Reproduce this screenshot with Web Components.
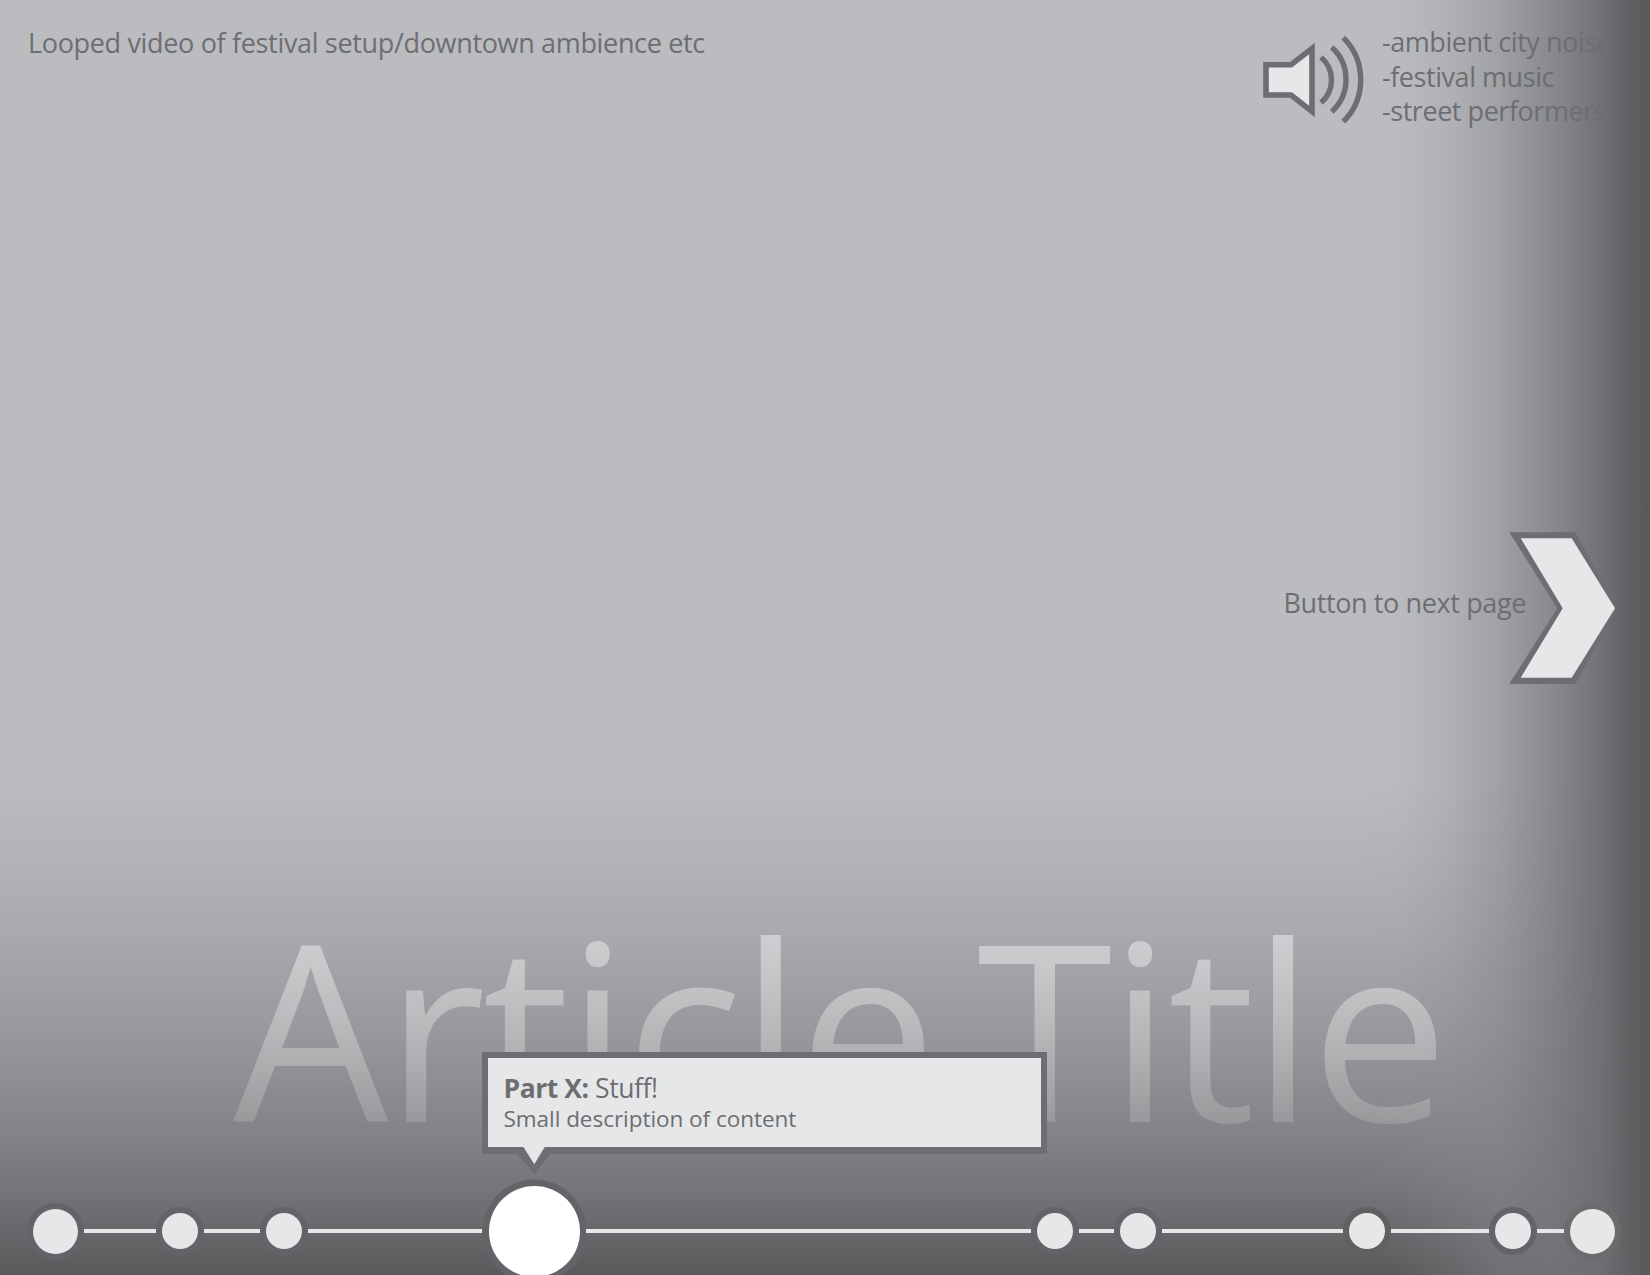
<!DOCTYPE html>
<html lang="en"><head><meta charset="utf-8"><title>Article Title</title>
<style>
html,body{margin:0;padding:0;background:#bcbdc0}
</style></head>
<body>
<x-stage>
  <x-topbar>
    <x-caption>Looped video of festival setup/downtown ambience etc</x-caption>
    <x-sound><div>-ambient city noise</div><div>-festival music</div><div>-street performers</div></x-sound>
  </x-topbar>
  <x-next>Button to next page</x-next>
  <x-title>Article Title</x-title>
  <x-callout><b slot="head">Part X</b><span slot="sub">Small description of content</span></x-callout>
  <x-timeline>
    <x-dot size="45"></x-dot><x-line w="72.5"></x-line>
    <x-dot></x-dot><x-line w="56"></x-line>
    <x-dot></x-dot><x-line w="174"></x-line>
    <x-dot size="91" active></x-dot><x-line w="445"></x-line>
    <x-dot></x-dot><x-line w="35"></x-line>
    <x-dot></x-dot><x-line w="181"></x-line>
    <x-dot halo="#5f6062"></x-dot><x-line w="98"></x-line>
    <x-dot halo="#636467"></x-dot><x-line w="27"></x-line>
    <x-dot size="45" halo="#6b6c6e"></x-dot>
  </x-timeline>
</x-stage>
<script>
const FONT = '"Open Sans","Noto Sans",sans-serif';
function def(name, html, init){
  customElements.define(name, class extends HTMLElement{
    constructor(){super();this.attachShadow({mode:'open'}).innerHTML=html;}
    connectedCallback(){ if(init) init(this); }
  });
}
def('x-stage',`<style>
:host{display:flex;flex-direction:column;position:relative;width:1650px;height:1275px;overflow:hidden;
 font-family:${FONT};color:#6d6e71;
 background:
  linear-gradient(90deg,rgba(150,151,154,0) 1360px,rgba(150,151,154,.04) 1400px,rgba(140,141,144,.23) 1450px,rgba(133,134,137,.51) 1500px,rgba(121,122,125,.75) 1550px,rgba(110,111,114,.96) 1600px,rgb(94,95,97) 1633px,rgb(88,89,91) 1650px),
  linear-gradient(180deg,#bbbcbf 0,#bbbcbf 780px,#b2b3b6 860px,#a9aaad 930px,#98999c 1030px,#818285 1140px,#747578 1190px,#5f6062 1255px,#58595b 1275px)}
</style><slot></slot>`);
def('x-topbar',`<style>:host{display:flex;justify-content:space-between;padding:25px 28px 0;height:104px}</style><slot></slot>`);
def('x-caption',`<style>:host{display:block;font-size:27px;line-height:35px;letter-spacing:-.335px;white-space:nowrap}</style><slot></slot>`);
def('x-sound',`<style>
:host{display:flex;gap:16px;margin-right:0;width:362px;font-size:27px;line-height:34.6px;letter-spacing:-.45px;white-space:nowrap}
svg{flex:none;width:106px;height:90px;margin-top:10px}
.t{width:240px}
</style>
<svg viewBox="1260 35 106 90" aria-hidden="true">
<polygon points="1266,64.7 1291,64.7 1312,48.5 1312,111.5 1291,95 1266,95" fill="#e6e7e8" stroke="#6d6e71" stroke-width="5.6"/>
<g fill="none" stroke="#6d6e71" stroke-width="5.4">
<path d="M1321 57.3A29.8 29.8 0 0 1 1321 102.7"/>
<path d="M1331.7 47.3A43.4 43.4 0 0 1 1331.7 111.7"/>
<path d="M1343.3 37.7A59.4 59.4 0 0 1 1343.3 121.7"/>
</g></svg><div class="t"><slot></slot></div>`);
def('x-next',`<style>
:host{display:flex;justify-content:flex-end;align-items:center;margin-top:403px;padding-right:33px;font-size:27px;letter-spacing:-.38px;white-space:nowrap}
span{padding-bottom:12px}
svg{flex:none;width:108px;height:152px;margin-left:-17px}
</style><span><slot></slot></span>
<svg viewBox="1509 532 108 152" aria-hidden="true">
<polygon points="1509.3,532.3 1575.3,532.3 1616.7,608.3 1575.3,684 1509.3,684 1557.3,608.3" fill="#6d6e71"/>
<polygon points="1520.7,538.3 1571.7,538.3 1615,608.3 1571.7,677.7 1520.7,677.7 1562.7,608.3" fill="#e6e7e8"/>
</svg>`);
def('x-title',`<style>
:host{display:block;margin-top:auto;padding:0 0 60.5px 233px;font-size:246px;font-weight:450;line-height:200px;letter-spacing:-3.4px;word-spacing:-16.7px;white-space:nowrap}
span{display:inline-block;padding-right:20px;color:transparent;-webkit-background-clip:text;background-clip:text;
 background-image:linear-gradient(180deg,rgba(230,231,232,.6) 10px,rgba(230,231,232,.2) 195px)}
</style><span><slot></slot></span>`);
def('x-callout',`<style>
:host{display:block;position:absolute;z-index:2;left:482px;top:1052px;width:564.5px;height:102px;box-sizing:border-box;
 border:6px solid #6d6e71;border-bottom-width:7px;background:#e6e7e8;padding-left:15.5px;white-space:nowrap}
.h{font-size:26.5px;line-height:31px;margin-top:15px;letter-spacing:-.45px}
.s{font-size:22.5px;line-height:30px;letter-spacing:-.04px}
b,::slotted(b){font-weight:700}
svg{position:absolute;left:21px;top:88px;width:50px;height:28px;overflow:visible}
</style>
<div class="h"><slot name="head"></slot><b>:</b> Stuff!</div>
<div class="s"><slot name="sub"></slot></div>
<svg viewBox="0 0 50 28" aria-hidden="true"><polygon points="8,8 41.5,8 25.3,28" fill="#6d6e71"/><polygon points="13.9,0 36.3,0 25.3,18.3" fill="#e6e7e8"/></svg>`);
def('x-timeline',`<style>
:host{display:flex;align-items:center;gap:6px;height:88px;flex:none;padding-left:32.5px}
</style><slot></slot>`);
def('x-dot',`<style>
:host{display:block;flex:none;width:var(--s,36px);height:var(--s,36px);border-radius:50%;background:#e6e7e8;box-shadow:0 0 0 6px var(--h,#636467)}
:host([active]){background:#fff;box-shadow:0 0 0 6.5px #636467;margin:0 .5px}
</style>`,el=>{const s=el.getAttribute('size'); if(s) el.style.setProperty('--s',s+'px');
 const h=el.getAttribute('halo'); if(h) el.style.setProperty('--h',h);});
def('x-line',`<style>:host{display:block;flex:none;height:4px;background:#e6e7e8;width:var(--w)}</style>`,
 el=>el.style.setProperty('--w',el.getAttribute('w')+'px'));
</script>
</body></html>
